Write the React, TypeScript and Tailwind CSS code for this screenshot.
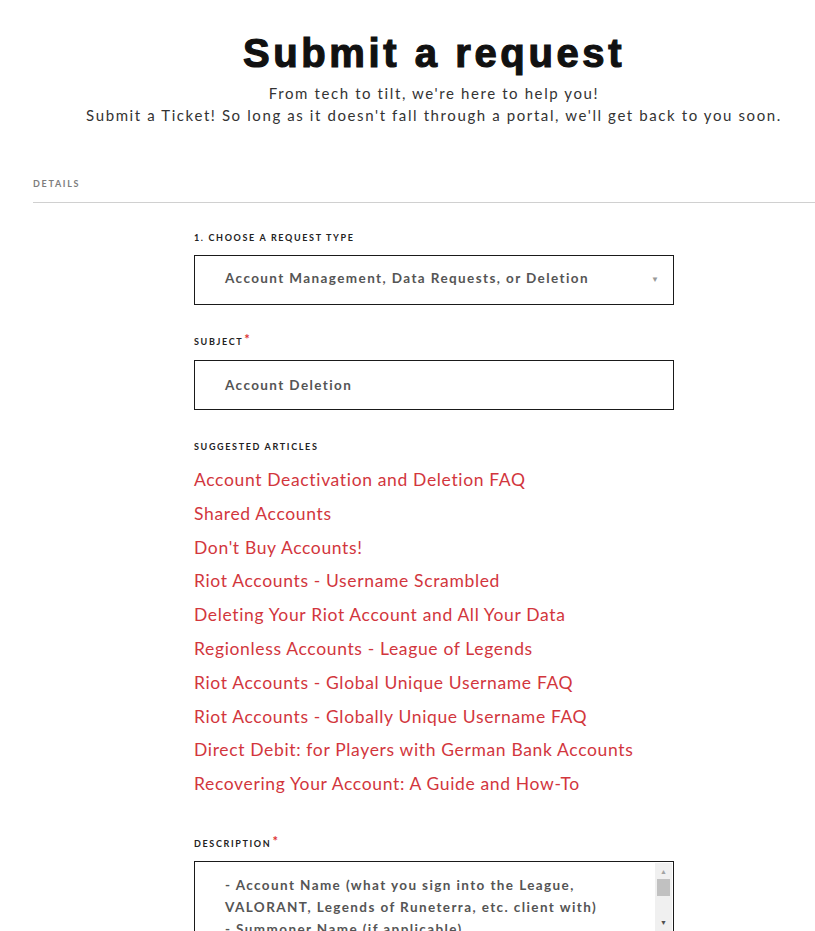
import React from 'react';

const articles = [
  'Account Deactivation and Deletion FAQ',
  'Shared Accounts',
  "Don't Buy Accounts!",
  'Riot Accounts - Username Scrambled',
  'Deleting Your Riot Account and All Your Data',
  'Regionless Accounts - League of Legends',
  'Riot Accounts - Global Unique Username FAQ',
  'Riot Accounts - Globally Unique Username FAQ',
  'Direct Debit: for Players with German Bank Accounts',
  'Recovering Your Account: A Guide and How-To',
];

function FieldLabel({ text, required }: { text: string; required?: boolean }) {
  return (
    <div className="flex items-start h-[18px] text-[9px] font-bold tracking-[1.65px] text-[#222]">
      <span className="leading-[18px]">{text}</span>
      {required && <span className="text-[#d33] text-[13px] leading-[12px] ml-[1px]">*</span>}
    </div>
  );
}

export default function App() {
  return (
    <div className="min-h-screen bg-white overflow-hidden font-['Lato','Liberation_Sans',sans-serif]">
      <div className="w-[800px] ml-[34px]">
        <header className="text-center pt-[33px]">
          <h1 className="text-[40px] leading-[40px] font-bold tracking-[3.6px] text-[#111] font-['Liberation_Sans',Arial,sans-serif] [-webkit-text-stroke:1.2px_#111]">
            Submit a request
          </h1>
          <p className="mt-[9px] text-[15px] leading-[22px] tracking-[1.6px] text-[#333]">
            From tech to tilt, we're here to help you!
            <br />
            Submit a Ticket! So long as it doesn't fall through a portal, we'll get back to you soon.
          </p>
        </header>

        <div className="mt-[53px] -ml-[1px] border-b border-[#d0d0d0] pb-[13px]">
          <span className="block text-[9px] leading-[10px] font-bold tracking-[1.7px] text-[#7d7d7d]">
            DETAILS
          </span>
        </div>

        <form className="w-[480px] mx-auto pt-[26px]">
          <FieldLabel text="1. CHOOSE A REQUEST TYPE" />
          <div className="mt-[8px] h-[50px] border border-[#1a1a1a] flex items-center justify-between pl-[30px] pr-[14px] pb-[3px]">
            <span className="text-[13.5px] font-bold tracking-[1.4px] text-[#555]">
              Account Management, Data Requests, or Deletion
            </span>
            <span className="text-[8px] text-[#999]">▼</span>
          </div>

          <div className="mt-[28px]">
            <FieldLabel text="SUBJECT" required />
          </div>
          <div className="mt-[9px] h-[50px] border border-[#1a1a1a] flex items-center pl-[30px]">
            <span className="text-[13.5px] font-bold tracking-[1.4px] text-[#555]">Account Deletion</span>
          </div>

          <div className="mt-[28px]">
            <FieldLabel text="SUGGESTED ARTICLES" />
          </div>
          <ul className="mt-[13px] flex flex-col">
            {articles.map((a) => (
              <li key={a} className="h-[33.8px] leading-[22px] text-[17.5px] tracking-[0.65px] text-[#d2363d]">
                <a href="#">{a}</a>
              </li>
            ))}
          </ul>

          <div className="mt-[28px]">
            <FieldLabel text="DESCRIPTION" required />
          </div>
          <div className="mt-[8px] h-[72px] border border-[#1a1a1a] flex overflow-hidden">
            <div className="flex-1 pl-[30px] pt-[12px] text-[13.5px] leading-[22px] font-bold tracking-[1.4px] text-[#555]">
              - Account Name (what you sign into the League,
              <br />
              VALORANT, Legends of Runeterra, etc. client with)
              <br />
              - Summoner Name (if applicable)
            </div>
            <div className="w-[17px] mr-[1px] my-[1px] bg-[#f0f0f0] flex flex-col items-center">
              <span className="text-[7px] leading-[16px] text-[#a3a3a3]">▲</span>
              <div className="w-[13px] h-[17px] bg-[#c1c1c1]" />
              <div className="flex-1" />
              <span className="text-[7px] leading-[18px] text-[#505050]">▼</span>
            </div>
          </div>
        </form>
      </div>
    </div>
  );
}
